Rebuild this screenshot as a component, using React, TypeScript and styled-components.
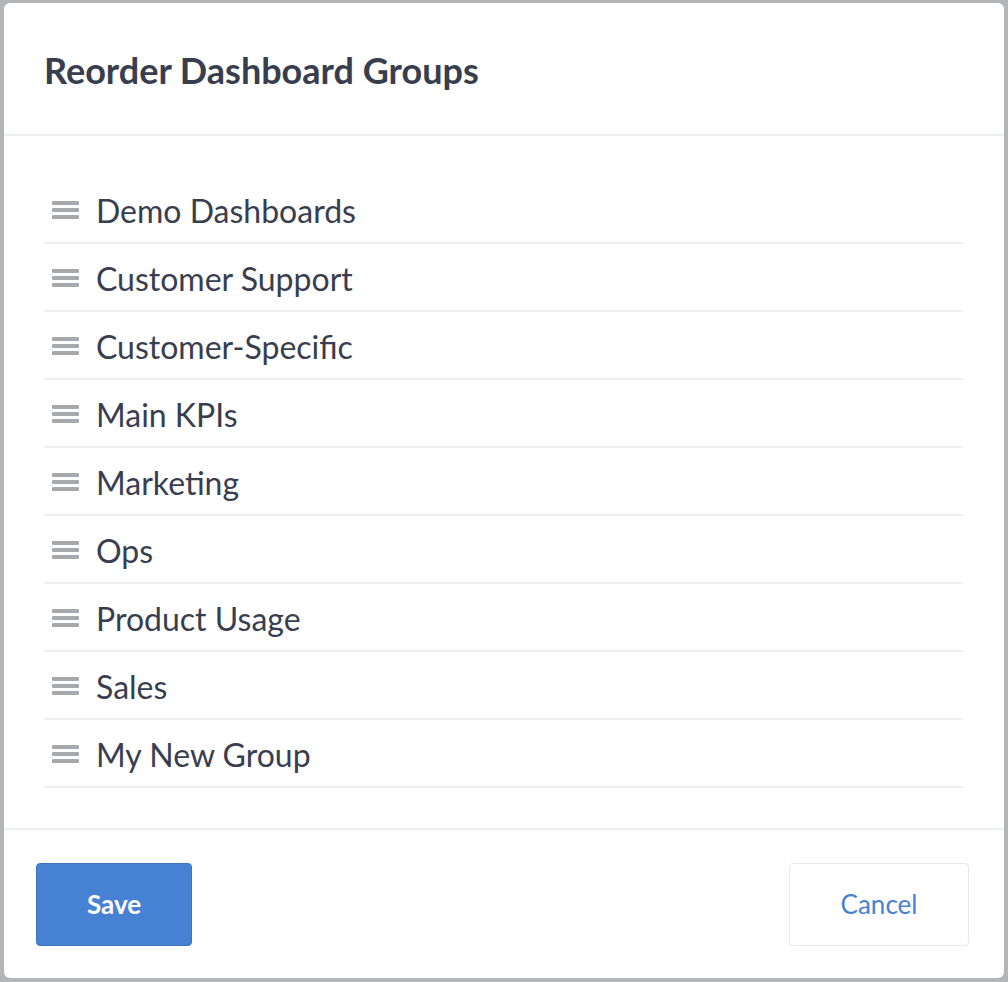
import React from 'react'
import styled, { createGlobalStyle } from 'styled-components'

const Global = createGlobalStyle`
  html, body { margin: 0; background: #b4b5b9; }
  body { font-family: Lato, "Open Sans", sans-serif; color: #393e4f; }
`

const Backdrop = styled.div`
  padding: 3px 4px 4px 4px;
  height: 982px;
  box-sizing: border-box;
`

const Modal = styled.div`
  background: #fff;
  border-radius: 6px;
  height: 100%;
  display: flex;
  flex-direction: column;
`

const Header = styled.div`
  height: 133px;
  box-sizing: border-box;
  border-bottom: 2px solid #eeeff1;
  display: flex;
  align-items: center;
  padding: 2px 40px 0;
`

const Title = styled.h2`
  margin: 0;
  font-size: 36px;
  font-weight: 700;
  color: #393e4f;
`

const Body = styled.div`
  padding: 40px 41px 40px 40px;
  border-bottom: 2px solid #eeeff1;
`

const Row = styled.div`
  height: 68px;
  box-sizing: border-box;
  border-bottom: 2px solid #eeeff1;
  display: flex;
  align-items: center;
  gap: 17px;
  padding-left: 8px;
  padding-top: 2px;
  font-size: 32px;
`

const Footer = styled.div`
  flex: 1;
  display: flex;
  align-items: center;
  justify-content: space-between;
  padding: 0 35px 0 32px;
`

const Button = styled.button<{ primary?: boolean }>`
  font-family: inherit;
  font-size: 26px;
  height: 83px;
  border-radius: 4px;
  cursor: pointer;
  width: ${p => (p.primary ? '156px' : '180px')};
  background: ${p => (p.primary ? '#4681d4' : '#fff')};
  color: ${p => (p.primary ? '#fff' : '#4681d4')};
  border: 1px solid ${p => (p.primary ? '#3c74c4' : '#e6e8ea')};
  font-weight: ${p => (p.primary ? 700 : 400)};
`

const Grip = () => (
  <svg width="27" height="20" viewBox="0 0 27 20">
    <rect x="0" y="1" width="27" height="4" rx="1" fill="#a6a8ad" />
    <rect x="0" y="8" width="27" height="4" rx="1" fill="#a6a8ad" />
    <rect x="0" y="15" width="27" height="4" rx="1" fill="#a6a8ad" />
  </svg>
)

const groups = [
  'Demo Dashboards',
  'Customer Support',
  'Customer-Specific',
  'Main KPIs',
  'Marketing',
  'Ops',
  'Product Usage',
  'Sales',
  'My New Group',
]

export default function App() {
  return (
    <Backdrop>
      <Global />
      <Modal>
        <Header>
          <Title>Reorder Dashboard Groups</Title>
        </Header>
        <Body>
          {groups.map(g => (
            <Row key={g}>
              <Grip />
              {g}
            </Row>
          ))}
        </Body>
        <Footer>
          <Button primary>Save</Button>
          <Button>Cancel</Button>
        </Footer>
      </Modal>
    </Backdrop>
  )
}
